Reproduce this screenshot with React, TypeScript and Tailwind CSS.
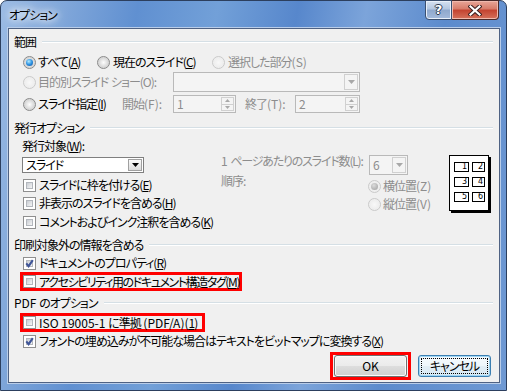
import React from "react";

const dis = "text-[#8d8d8d]";

function K({ c }: { c: string }) {
  return <span className="underline decoration-1 underline-offset-[1px]">{c}</span>;
}

function L({ children }: { children: React.ReactNode }) {
  return <span className="tracking-normal">{children}</span>;
}

function Radio({ checked = false, disabled = false }: { checked?: boolean; disabled?: boolean }) {
  const ring = disabled
    ? "border-[#cacaca] bg-[radial-gradient(circle_at_50%_50%,#f8f8f8_0%,#eeeeee_60%,#f5f5f5_100%)]"
    : "border-[#8a8a8a] bg-[radial-gradient(circle_at_50%_50%,#fdfdfd_0%,#d6d6d6_62%,#eeeeee_100%)]";
  const dot = disabled
    ? "bg-[radial-gradient(circle_at_40%_35%,#dcdcdc,#9d9d9d)]"
    : "bg-[radial-gradient(circle_at_40%_35%,#b4ecff_0%,#2d92e2_50%,#0b4c9a_100%)]";
  return (
    <span className={`inline-flex h-[13px] w-[13px] shrink-0 items-center justify-center rounded-full border ${ring}`}>
      {checked && <span className={`h-[7px] w-[7px] rounded-full ${dot}`} />}
    </span>
  );
}

function Check({ checked = false }: { checked?: boolean }) {
  return (
    <span className="relative inline-flex h-[13px] w-[13px] shrink-0 border border-[#8f8f8f] bg-white p-[2px]">
      <span className="block h-full w-full border border-[#b3b7bd] bg-gradient-to-br from-[#c9cdd3] to-[#f5f5f5]" />
      {checked && (
        <svg className="absolute left-0 top-0" width="11" height="11" viewBox="0 0 11 11">
          <path d="M2.3 5.4 L4.6 8.2 L8.8 2.2" fill="none" stroke="#3f5598" strokeWidth="2.1" />
        </svg>
      )}
    </span>
  );
}

function Arrow({ color }: { color: string }) {
  return (
    <svg width="7" height="4" viewBox="0 0 7 4">
      <path d="M0 0 H7 L3.5 4 Z" fill={color} />
    </svg>
  );
}

function Combo({ className, value, disabled = false }: { className: string; value?: string; disabled?: boolean }) {
  return (
    <div
      className={`flex shrink-0 border ${
        disabled ? "border-[#b9b9b9] bg-[#f4f4f4]" : "border-[#7f7f7f] bg-white"
      } ${className}`}
    >
      <span className={`flex flex-1 items-center pl-[3px] leading-[14px] ${disabled ? dis : ""}`}>{value}</span>
      <span
        className={`my-[1px] mr-[1px] flex w-[14px] items-center justify-center border ${
          disabled ? "border-[#d0d0d0] bg-[#f4f4f4]" : "border-[#a0a0a0] bg-gradient-to-b from-[#fafafa] to-[#dcdcdc]"
        }`}
      >
        <Arrow color={disabled ? "#a8a8a8" : "#000000"} />
      </span>
    </div>
  );
}

function Spin({ className, value }: { className: string; value: string }) {
  return (
    <div className={`flex shrink-0 border border-[#b9b9b9] bg-[#f4f4f4] ${className}`}>
      <span className={`flex flex-1 items-center pl-[3px] leading-[14px] ${dis}`}>{value}</span>
      <div className="my-[1px] mr-[1px] flex w-[13px] flex-col border border-[#d0d0d0]">
        <span className="flex flex-1 items-center justify-center border-b border-[#d0d0d0]">
          <svg width="5" height="3" viewBox="0 0 5 3">
            <path d="M0 3 H5 L2.5 0 Z" fill="#a8a8a8" />
          </svg>
        </span>
        <span className="flex flex-1 items-center justify-center">
          <svg width="5" height="3" viewBox="0 0 5 3">
            <path d="M0 0 H5 L2.5 3 Z" fill="#a8a8a8" />
          </svg>
        </span>
      </div>
    </div>
  );
}

function Group({ children, className }: { children: React.ReactNode; className: string }) {
  return (
    <div className={`flex h-[16px] items-center pl-[5px] pr-[6px] ${className}`}>
      <span className="leading-[14px]">{children}</span>
      <span className="ml-[6px] h-[2px] flex-1 border-t border-b border-t-[#d5dfe5] border-b-white" />
    </div>
  );
}

function CheckRow({ checked = false, children }: { checked?: boolean; children: React.ReactNode }) {
  return (
    <div className="flex h-[18px] items-center pl-[14px]">
      <Check checked={checked} />
      <span className="ml-[3px] leading-[14px]">{children}</span>
    </div>
  );
}

function Preview() {
  const cells = ["1", "2", "3", "4", "5", "6"];
  return (
    <div className="h-[56px] w-[40px] shrink-0 border border-black bg-white pl-[4px] pt-[6px] [box-shadow:2px_2px_0_#000]">
      <div className="grid grid-cols-[15px_13px] gap-x-[3px] gap-y-[5px]">
        {cells.map((c) => (
          <span
            key={c}
            className="block h-[10px] border border-black pr-[1px] text-right font-['DejaVu_Sans',sans-serif] text-[8px] leading-[8px] tracking-normal"
          >
            {c}
          </span>
        ))}
      </div>
    </div>
  );
}

export default function App() {
  return (
    <div className="h-[391px] w-[507px] whitespace-nowrap bg-white font-['Noto_Sans_CJK_JP',sans-serif] text-[12px] tracking-[-1px] text-black [font-feature-settings:'palt']">
      <div className="flex h-full w-full flex-col rounded-t-[7px] border border-[#2c3f5e] bg-[linear-gradient(100deg,#9bbbe4_0%,#7ea5d9_12%,#6090d1_24%,#72a0d8_38%,#5787cc_52%,#7ca4da_64%,#5c8bcd_78%,#6f99d3_100%)] pb-[7px] pl-[7px] pr-[6px]">
        {/* title bar */}
        <div className="flex h-[27px] shrink-0">
          <div className="flex items-center pl-[1px] pt-[1px]">
            <span className="leading-[14px] [text-shadow:0_0_6px_#ffffff,0_0_10px_#ffffff,0_0_14px_#ffffff]">
              オプション
            </span>
          </div>
          <div className="ml-auto mr-[1px] -mt-[1px] flex h-[20px]">
            <div className="flex w-[27px] items-center justify-center rounded-bl-[4px] border border-[#3a4f70] bg-[linear-gradient(#d6e2f1_0%,#b3c6e0_45%,#8ea8cd_50%,#a4badb_100%)] [box-shadow:inset_0_0_0_1px_#e9f0fa]">
              <span className="font-['DejaVu_Sans',sans-serif] text-[13px] font-bold leading-[14px] tracking-normal text-white [text-shadow:1px_0_#2d3a50,-1px_0_#2d3a50,0_1px_#2d3a50,0_-1px_#2d3a50]">
                ?
              </span>
            </div>
            <div className="flex w-[47px] items-center justify-center rounded-br-[4px] border border-l-0 border-[#4a2a2a] bg-[linear-gradient(#e8a698_0%,#d77a68_45%,#c3422f_50%,#d5725c_100%)] [box-shadow:inset_0_0_0_1px_#f0b9ad]">
              <svg width="14" height="11" viewBox="0 0 14 11">
                <path d="M2.5 1.5 L11.5 9.5 M11.5 1.5 L2.5 9.5" stroke="#3b2020" strokeWidth="4.2" strokeLinecap="square" />
                <path d="M2.5 1.5 L11.5 9.5 M11.5 1.5 L2.5 9.5" stroke="#ffffff" strokeWidth="2.2" strokeLinecap="square" />
              </svg>
            </div>
          </div>
        </div>

        {/* client area */}
        <div className="flex h-[355px] w-[492px] flex-col border border-[#4f6283] bg-[#f0f0f0] [box-shadow:0_0_0_1px_#b9cde9]">
          <Group className="mt-[5px]">範囲</Group>
          <div className="mt-[2px] flex h-[20px] items-center pl-[14px]">
            <div className="flex w-[74px] items-center">
              <Radio checked />
              <span className="ml-[2px] leading-[14px]">
                すべて(<K c="A" />)
              </span>
            </div>
            <div className="flex w-[115px] items-center">
              <Radio />
              <span className="ml-[3px] leading-[14px]">
                現在のスライド(<K c="C" />)
              </span>
            </div>
            <div className="flex items-center">
              <Radio disabled />
              <span className={`ml-[3px] leading-[14px] ${dis}`}>
                選択した部分<L>(S)</L>
              </span>
            </div>
          </div>
          <div className="flex h-[20px] items-center pl-[14px]">
            <div className="flex w-[150px] items-center">
              <Radio disabled />
              <span className={`ml-[2px] leading-[14px] ${dis}`}>
                目的別スライド<L> </L>ショー(O):
              </span>
            </div>
            <Combo className="h-[20px] w-[187px]" disabled />
          </div>
          <div className="mt-[2px] flex h-[20px] items-center pl-[14px]">
            <div className="flex w-[99px] items-center">
              <Radio />
              <span className="ml-[2px] leading-[14px]">
                スライド指定(<K c="I" />)
              </span>
            </div>
            <span className={`w-[51px] leading-[14px] ${dis}`}>
              開始<L>(F):</L>
            </span>
            <Spin className="h-[18px] w-[63px]" value="1" />
            <span className={`w-[59px] pl-[9px] leading-[14px] ${dis}`}>
              終了<L>(T):</L>
            </span>
            <Spin className="h-[18px] w-[65px]" value="2" />
          </div>

          <Group className="mt-[6px]">発行オプション</Group>
          <div className="mt-[2px] flex">
            <div className="flex w-[212px] shrink-0 flex-col">
              <div className="flex h-[16px] items-center pl-[13px] leading-[14px]">
                発行対象(<K c="W" />):
              </div>
              <div className="mt-[3px] pl-[13px]">
                <Combo className="h-[16px] w-[122px]" value="スライド" />
              </div>
              <div className="mt-[3px] flex flex-col">
                <CheckRow>
                  スライドに枠を付ける(<K c="E" />)
                </CheckRow>
                <CheckRow>
                  非表示のスライドを含める(<K c="H" />)
                </CheckRow>
                <div className="mt-[1px]">
                  <CheckRow>
                    コメントおよびインク注釈を含める(<K c="K" />)
                  </CheckRow>
                </div>
              </div>
            </div>
            <div className="flex pt-[17px]">
              <div className={`flex w-[148px] shrink-0 flex-col ${dis}`}>
                <div className="h-[20px] leading-[12px] tracking-[-1.2px]">
                  <L>1 </L>ページあたりのスライド数(L):
                </div>
                <div className="leading-[12px]">順序:</div>
              </div>
              <div className="flex w-[80px] shrink-0 flex-col">
                <Combo className="h-[20px] w-[39px]" value="6" disabled />
                <div className="mt-[2px] -ml-[1px] flex h-[18px] items-center">
                  <Radio checked disabled />
                  <span className={`ml-[2px] leading-[14px] ${dis}`}>
                    横位置<L>(Z)</L>
                  </span>
                </div>
                <div className="-ml-[1px] flex h-[18px] items-center">
                  <Radio disabled />
                  <span className={`ml-[2px] leading-[14px] ${dis}`}>
                    縦位置<L>(V)</L>
                  </span>
                </div>
              </div>
              <Preview />
            </div>
          </div>

          <Group className="mt-[6px]">印刷対象外の情報を含める</Group>
          <div className="mt-[1px]">
            <CheckRow checked>
              ドキュメントのプロパティ(<K c="R" />)
            </CheckRow>
          </div>
          <div className="ml-[11px] flex h-[19px] w-[222px] items-center border-[3px] border-[#ff0000]">
            <Check />
            <span className="ml-[3px] leading-[13px] tracking-[-1.4px]">
              アクセシビリティ用のドキュメント構造タグ(<K c="M" />)
            </span>
          </div>

          <Group className="mt-[4px]">
            <L>PDF </L>のオプション
          </Group>
          <div className="ml-[11px] mt-[2px] flex h-[19px] w-[185px] items-center border-[3px] border-[#ff0000]">
            <Check />
            <span className="ml-[3px] leading-[13px]">
              <L>ISO 19005-1 </L>に準拠<L> (PDF/A)(</L>
              <K c="1" />)
            </span>
          </div>
          <CheckRow checked>
            フォントの埋め込みが不可能な場合はテキストをビットマップに変換する(<K c="X" />)
          </CheckRow>

          <div className="mt-[2px] flex h-[28px] items-center justify-end pr-[8px]">
            <div className="border-[3px] border-[#ff0000] px-[1px]">
              <div className="flex h-[22px] w-[73px] items-center justify-center rounded-[3px] border border-[#707070] bg-[linear-gradient(#f2f2f2_0%,#ebebeb_48%,#dddddd_52%,#cfcfcf_100%)] leading-[14px] tracking-normal [box-shadow:inset_0_0_0_1px_#fbfbfb]">
                OK
              </div>
            </div>
            <div className="ml-[7px] flex h-[22px] w-[73px] rounded-[3px] border border-[#3c7fb1] bg-[linear-gradient(#f6fbfe_0%,#eef6fb_48%,#e2eef6_52%,#d6e8f3_100%)] p-[2px] [box-shadow:inset_0_0_0_1px_#9fd6f5]">
              <span className="flex flex-1 items-center justify-center border border-dotted border-black leading-[14px]">
                キャンセル
              </span>
            </div>
          </div>
        </div>
      </div>
    </div>
  );
}
